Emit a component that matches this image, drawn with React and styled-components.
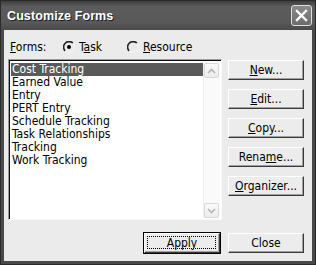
import styled, { createGlobalStyle } from 'styled-components';

const Global = createGlobalStyle`
	html, body {
		margin: 0;
		padding: 0;
		background: #2e2e2e;
	}
`;

const Window = styled.div`
	width: 316px;
	height: 265px;
	box-sizing: border-box;
	display: flex;
	flex-direction: column;
	background: #4a4a4a;
	border: 1px solid #2a2a2a;
	font-family: Tahoma, 'DejaVu Sans Condensed', 'Liberation Sans', sans-serif;
	font-size: 12px;
	color: #000;
`;

const TitleBar = styled.div`
	height: 29px;
	flex: none;
	display: flex;
	align-items: center;
	justify-content: space-between;
	padding: 0 3px 0 6px;
	background: linear-gradient(#3e3e3e, #5c5c5c 20%, #585858 75%, #4a4a4a);
`;

const Title = styled.span`
	font-family: 'Liberation Sans', Arial, sans-serif;
	font-weight: 700;
	font-size: 12.5px;
	color: #fff;
	text-shadow: 1px 1px 0 #222;
	letter-spacing: 0.1px;
`;

const CloseBox = styled.div`
	width: 19px;
	height: 19px;
	border: 1px solid #e0e0e0;
	border-radius: 3px;
	background: linear-gradient(#8a8a8a, #6c6c6c);
	display: flex;
	align-items: center;
	justify-content: center;
`;

const Client = styled.div`
	flex: 1;
	margin: 0 3px 3px 3px;
	background: #ebebeb;
	display: flex;
	flex-direction: column;
	padding: 10px 8px 8px 4px;
`;

const RadioRow = styled.div`
	display: flex;
	align-items: center;
	height: 14px;
	padding-left: 2px;
`;

const Label = styled.span`
	width: 53px;
`;

const RadioItem = styled.label`
	display: flex;
	align-items: center;
	gap: 4px;
	width: ${({ $w }) => $w}px;
`;

const U = styled.span`
	text-decoration: underline;
`;

const Body = styled.div`
	display: flex;
	gap: 6px;
	margin-top: 5px;
`;

const ListBox = styled.div`
	width: 214px;
	height: 161px;
	box-sizing: border-box;
	background: #fff;
	border-top: 1px solid #9a9a9a;
	border-left: 1px solid #9a9a9a;
	border-right: 1px solid #f8f8f8;
	border-bottom: 1px solid #f8f8f8;
	box-shadow: inset 1px 1px 0 #111;
	display: flex;
	padding: 3px 1px 1px 2px;
`;

const Items = styled.div`
	flex: 1;
	display: flex;
	flex-direction: column;
`;

const Item = styled.div`
	height: 13px;
	line-height: 13px;
	padding-left: 1px;
	background: ${({ $sel }) => ($sel ? '#5a5a5a' : 'transparent')};
	color: ${({ $sel }) => ($sel ? '#fff' : '#000')};
	white-space: nowrap;
`;

const ScrollBar = styled.div`
	width: 16px;
	display: flex;
	flex-direction: column;
	justify-content: space-between;
	background: #fafafa;
	border-left: 1px solid #f0f0f0;
`;

const Arrow = styled.div`
	width: 15px;
	height: 15px;
	box-sizing: border-box;
	border: 1px solid #d8d8d8;
	border-radius: 2px;
	background: linear-gradient(#fbfbfb, #ececec);
	display: flex;
	align-items: center;
	justify-content: center;
`;

const ButtonCol = styled.div`
	display: flex;
	flex-direction: column;
	gap: 9px;
	padding-top: 1px;
`;

const Button = styled.div`
	width: 76px;
	height: 20px;
	box-sizing: border-box;
	display: flex;
	align-items: center;
	justify-content: center;
	background: #ececec;
	border-top: 1px solid #fff;
	border-left: 1px solid #fff;
	border-right: 1px solid #3a3a3a;
	border-bottom: 1px solid #3a3a3a;
	box-shadow: inset -1px -1px 0 #a0a0a0;
	outline: ${({ $default }) => ($default ? '1px solid #000' : 'none')};
	position: relative;
`;

const Focus = styled.span`
	position: absolute;
	inset: 2px 3px 3px 2px;
	border: 1px dotted #000;
`;

const Footer = styled.div`
	display: flex;
	justify-content: flex-end;
	gap: 8px;
	margin-top: 13px;
`;

const RadioIcon = ({ checked }) => (
	<svg width='12' height='12' viewBox='0 0 12 12'>
		<path d='M10 2.2 A5 5 0 1 0 2.2 10' fill='none' stroke='#222' strokeWidth='1.6' />
		<path d='M9.8 2 A5 5 0 0 1 2 9.8' fill='none' stroke='#f4f4f4' strokeWidth='1.2' />
		{checked && <circle cx='6' cy='6' r='2' fill='#000' />}
	</svg>
);

const items = [
	'Cost Tracking',
	'Earned Value',
	'Entry',
	'PERT Entry',
	'Schedule Tracking',
	'Task Relationships',
	'Tracking',
	'Work Tracking',
];

const App = () => {
	return (
		<>
			<Global />
			<Window>
				<TitleBar>
					<Title>Customize Forms</Title>
					<CloseBox>
						<svg width='13' height='13' viewBox='0 0 13 13'>
							<path d='M2 2 L11 11 M11 2 L2 11' stroke='#fff' strokeWidth='2.4' strokeLinecap='square' />
						</svg>
					</CloseBox>
				</TitleBar>
				<Client>
					<RadioRow>
						<Label>
							<U>F</U>orms:
						</Label>
						<RadioItem $w={64}>
							<RadioIcon checked />
							<span>
								T<U>a</U>sk
							</span>
						</RadioItem>
						<RadioItem $w={80}>
							<RadioIcon />
							<span>
								<U>R</U>esource
							</span>
						</RadioItem>
					</RadioRow>
					<Body>
						<ListBox>
							<Items>
								{items.map((t, i) => (
									<Item key={t} $sel={i === 0}>
										{t}
									</Item>
								))}
							</Items>
							<ScrollBar>
								<Arrow>
									<svg width='9' height='6' viewBox='0 0 9 6'>
										<path d='M1 5 L4.5 1.5 L8 5' fill='none' stroke='#b4b4b4' strokeWidth='1.6' />
									</svg>
								</Arrow>
								<Arrow>
									<svg width='9' height='6' viewBox='0 0 9 6'>
										<path d='M1 1 L4.5 4.5 L8 1' fill='none' stroke='#b4b4b4' strokeWidth='1.6' />
									</svg>
								</Arrow>
							</ScrollBar>
						</ListBox>
						<ButtonCol>
							<Button>
								<span>
									<U>N</U>ew...
								</span>
							</Button>
							<Button>
								<span>
									<U>E</U>dit...
								</span>
							</Button>
							<Button>
								<span>
									<U>C</U>opy...
								</span>
							</Button>
							<Button>
								<span>
									Rena<U>m</U>e...
								</span>
							</Button>
							<Button>
								<span>
									<U>O</U>rganizer...
								</span>
							</Button>
						</ButtonCol>
					</Body>
					<Footer>
						<Button $default>
							<Focus />
							<span>Apply</span>
						</Button>
						<Button>
							<span>Close</span>
						</Button>
					</Footer>
				</Client>
			</Window>
		</>
	);
};

export default App;
